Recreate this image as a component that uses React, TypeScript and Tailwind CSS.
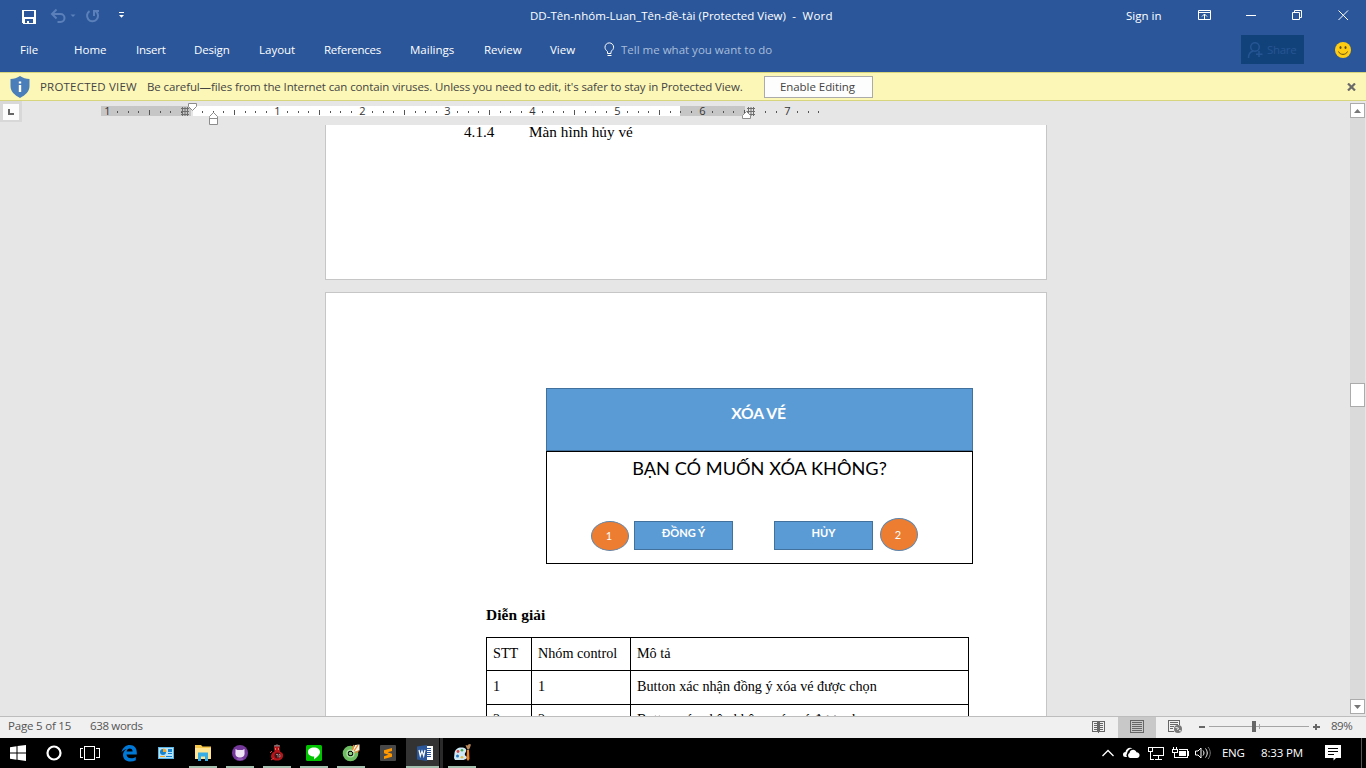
import type { ReactNode } from "react";

const tabs = [
  { label: "File", cls: "w-[54px]" },
  { label: "Home", cls: "w-[62px]" },
  { label: "Insert", cls: "w-[58px] tracking-[-0.25px]" },
  { label: "Design", cls: "w-[65px] tracking-[-0.15px]" },
  { label: "Layout", cls: "w-[65px]" },
  { label: "References", cls: "w-[86px] tracking-[-0.25px]" },
  { label: "Mailings", cls: "w-[74px]" },
  { label: "Review", cls: "w-[66px]" },
  { label: "View", cls: "w-[54px]" },
];

function TitleBar() {
  return (
    <div className="grid h-8 grid-cols-[530px_1fr_240px] items-center">
      <div className="flex h-8 items-center pl-[22px]">
        <svg width="110" height="18" viewBox="0 0 110 18" fill="none">
          <g shapeRendering="crispEdges">
            <path d="M0 3h14v14H1l-1-1zM2 4v6h10V4zM3 12v4h2v-2h2v2h4v-4z" fill="#fff" fillRule="evenodd" />
          </g>
          <g stroke="#5b80ba" strokeWidth="2">
            <path d="M30 7h8.500a4 4 0 0 1 0 8h-3" />
            <path d="M34.500 2.500L30 7l4.500 4.500" />
            <path d="M67.500 4.200a5.500 5.500 0 1 0 6.500 0.300" />
            <path d="M72 9V4h5" />
          </g>
          <path d="M48.500 7.500h5l-2.500 2.500z" fill="#5b80ba" />
          <path d="M97 5h5v1h-5zM97 8h5l-2.500 2.800z" fill="#fff" />
        </svg>
      </div>
      <div className="whitespace-pre tracking-[0.02px]">
        DD-Tên-nhóm-Luan_Tên-đề-tài (Protected View)<span className="tracking-[0.2px]">  -  Word</span>
      </div>
      <div className="flex h-8 items-center">
        <span className="w-[72px]">Sign in</span>
        <svg width="168" height="32" viewBox="0 0 168 32" fill="none" stroke="#fff">
          <path d="M0.500 10.500h12v9h-12zM0.500 12.500h12M6.500 19v-5M4 16.500l2.500-2.500 2.500 2.500" />
          <path d="M48 15.500h10" />
          <path d="M94.500 12.500h7v7h-7zM96.500 12v-1.500h7v7h-2" />
          <path d="M140.500 10.500l9.500 9.500M150 10.500l-9.500 9.500" />
        </svg>
      </div>
    </div>
  );
}

function TabRow() {
  return (
    <div className="flex h-[35px] items-center pl-5">
      {tabs.map((t) => (
        <span key={t.label} className={t.cls}>
          {t.label}
        </span>
      ))}
      <div className="flex flex-1 items-center">
        <svg width="17" height="16" viewBox="0 0 17 16" fill="none" stroke="#fff">
          <path d="M3.500 11.500V9.500C2 8.300 1 7 1 5.200a4.300 4.300 0 0 1 8.600 0C9.600 7 8.500 8.300 7 9.500v2zM3.500 13.500h4" />
        </svg>
        <span className="text-[#a9bddb]">Tell me what you want to do</span>
      </div>
      <div className="flex h-[29px] w-[63px] items-center bg-[#12427a] pl-1.5 text-[#265594]">
        <svg className="mr-1" width="16" height="16" viewBox="0 0 16 16" fill="none" stroke="#265594" strokeWidth="1.500">
          <circle cx="8" cy="5" r="4.300" />
          <path d="M1.500 16c0-4 2-6.500 5-7M12 9v6M9 12.300h6.500" />
        </svg>
        <span className="tracking-[-0.3px]">Share</span>
      </div>
      <svg className="mr-[15px] ml-[31px]" width="16" height="16" viewBox="0 0 16 16">
        <circle cx="8" cy="8" r="8" fill="#fc1" />
        <ellipse cx="5.500" cy="5.500" rx="1" ry="1.500" fill="#5f4c12" />
        <ellipse cx="10.500" cy="5.500" rx="1" ry="1.500" fill="#5f4c12" />
        <path d="M3.500 9.500c1.500 3.800 7.500 3.800 9 0" fill="none" stroke="#5f4c12" />
      </svg>
    </div>
  );
}

function ProtectedBar() {
  return (
    <div className="flex h-[29px] items-center border-y border-[#d8d57f] bg-[#fcf7b6] pl-2.5 text-[#444]">
      <svg className="mr-2.5" width="20" height="22" viewBox="0 0 20 22">
        <path d="M10 0c3 2 6 3 9.500 3v7c0 5.500-4 9-9.500 12C4.500 19 .5 15.500.5 10V3C4 3 7 2 10 0z" fill="#4a7ebb" />
        <path d="M8.800 5.500h2.400v2H8.800zM8.800 9h2.400v7H8.800z" fill="#fff" />
      </svg>
      <span className="w-[107px] tracking-[0.2px]">PROTECTED VIEW</span>
      <span className="w-[617px] tracking-[-0.115px] whitespace-nowrap">
        Be careful—files from the Internet can contain viruses. Unless you need to edit, it's safer to stay in Protected View.
      </span>
      <button className="h-[22px] w-[109px] border border-[#ababab] bg-[#fdfdfd] pr-0.5 leading-5 tracking-[-0.05px]">Enable Editing</button>
      <svg className="mr-2.5 ml-auto" width="9" height="8" viewBox="0 0 9 8" stroke="#6a6a6a" strokeWidth="2.200">
        <path d="M1 .5l7 7M8 .5l-7 7" />
      </svg>
    </div>
  );
}

const inch = 85;
const zero = 192.5;
const marks = Array.from({ length: 68 }, (_, i) => i - 8).filter((k) => k > -8 && k < 60 && k !== 0 && k !== 53);

function Hatch({ x }: { x: number }) {
  return (
    <path
      d={`M${x} 7.500h8M${x} 10.500h8M${x} 13.500h8M${x + 1.5} 6v9M${x + 4} 6v9M${x + 6.5} 6v9`}
      stroke="#6e6e6e"
      fill="none"
    />
  );
}

function Ruler() {
  return (
    <div className="flex h-6">
      <div className="flex h-[21px] w-[22px] items-start bg-[#d8d8d8] pt-[3px] pl-[3px]">
        <div className="flex h-4 w-4 items-center justify-center bg-[#fcfcfc]">
          <svg width="6" height="6" viewBox="0 0 6 6">
            <path d="M1 0v5h5" fill="none" stroke="#666" strokeWidth="2" />
          </svg>
        </div>
      </div>
      <svg width="860" height="24" viewBox="22 0 860 24" fontFamily="Open Sans, sans-serif" fontSize="11">
        <g shapeRendering="crispEdges">
          <rect x="101" y="5" width="90" height="10" fill="#c6c6c6" />
          <rect x="193" y="5" width="487" height="10" fill="#fff" />
          <rect x="680" y="5" width="65" height="10" fill="#c6c6c6" />
          {marks.map((k) => {
            const x = Math.floor(zero + (k * inch) / 8 - 0.5);
            if (k % 8 === 0) return null;
            return k % 4 === 0 ? (
              <rect key={k} x={x} y="9" width="1" height="5" fill="#555" />
            ) : (
              <rect key={k} x={x} y="10" width="1" height="2" fill="#555" />
            );
          })}
        </g>
        {[-1, 1, 2, 3, 4, 5, 6, 7].map((n) => (
          <text key={n} x={zero + n * inch} y="14" textAnchor="middle" fill="#333">
            {Math.abs(n)}
          </text>
        ))}
        <Hatch x={181} />
        <Hatch x={747} />
        <g fill="#fff" stroke="#8c8c8c">
          <path d="M188.500 2.500h8v3l-4 4-4-4z" />
          <path d="M209.500 16.500v-1l4-4 4 4v8h-8zM209.500 17.500h8" />
          <path d="M742.500 17.500v-3l4-4 4 4v3z" />
        </g>
      </svg>
    </div>
  );
}

function Badge({ children, cls }: { children: ReactNode; cls: string }) {
  return (
    <div className={`flex w-[38px] items-center justify-center rounded-[50%] border border-[#5f86ad] bg-[#ed7d31] pr-0.5 text-[11px] text-white ${cls}`}>
      {children}
    </div>
  );
}

function DialogFigure() {
  return (
    <div className="ml-[220px] flex h-[176px] w-[427px] flex-col font-['Lato',sans-serif]">
      <div className="h-[63px] border border-[#41719c] bg-[#5b9bd5] pt-3 pr-0.5 text-center text-[15.7px] leading-6 font-bold tracking-[-0.2px] text-white">
        XÓA VÉ
      </div>
      <div className="flex-1 border border-black text-center text-[18.2px] leading-8 text-black">
        <div>BẠN CÓ MUỐN XÓA KHÔNG?</div>
        <div className="mt-[34px] flex h-[34px] pl-11 text-[11.1px] leading-[22px]">
          <Badge cls="mt-[3px] h-[30px]">1</Badge>
          <div className="mt-[3px] ml-[5px] h-[29px] w-[99px] border border-[#41719c] bg-[#5b9bd5] font-bold text-white">ĐỒNG Ý</div>
          <div className="mt-[3px] ml-[41px] h-[29px] w-[99px] border border-[#41719c] bg-[#5b9bd5] font-bold text-white">HỦY</div>
          <Badge cls="ml-[7px] h-[33px]">2</Badge>
        </div>
      </div>
    </div>
  );
}

const rows = [
  { cells: ["STT", "Nhóm control", "Mô tả"], cls: "h-[33px] leading-[30px]" },
  { cells: ["1", "1", "Button xác nhận đồng ý xóa vé được chọn"], cls: "h-[34px] leading-[30px]" },
  { cells: ["2", "2", "Button xác nhận không xóa vé được chọn"], cls: "h-[34px] leading-7" },
];

function DocumentArea() {
  return (
    <div className="flex flex-1 flex-col overflow-hidden pl-[325px] font-['Liberation_Serif',serif] text-black">
      <div className="flex h-[155px] w-[722px] shrink-0 border border-t-0 border-[#c6c6c6] bg-white pl-[138px] text-[15.2px] leading-[14px]">
        <span className="w-[65px]">4.1.4</span>
        <span className="tracking-[0.03px]">Màn hình hủy vé</span>
      </div>
      <div className="mt-3 h-[600px] w-[722px] shrink-0 border border-[#c6c6c6] bg-white pt-[95px]">
        <DialogFigure />
        <div className="mt-[41px] ml-40 h-8 text-[15.4px] leading-5 font-bold tracking-[0.1px]">Diễn giải</div>
        <div className="ml-40 w-[483px] border-t border-l border-black text-[14.2px]">
          {rows.map((r) => (
            <div key={r.cells[2]} className={`grid grid-cols-[45px_99px_1fr] ${r.cls}`}>
              {r.cells.map((c, i) => (
                <div key={i} className="border-r border-b border-black pl-1.5">
                  {c}
                </div>
              ))}
            </div>
          ))}
        </div>
      </div>
    </div>
  );
}

function ScrollButton({ d }: { d: string }) {
  return (
    <div className="flex h-[15px] w-[15px] items-center justify-center border border-[#ababab] bg-white">
      <svg width="7" height="4" viewBox="0 0 7 4">
        <path d={d} fill="#777" />
      </svg>
    </div>
  );
}

function ScrollBar() {
  return (
    <div className="mt-0.5 mr-px mb-0.5 flex w-[15px] flex-col bg-[#dadada]">
      <ScrollButton d="M0 4L3.500 0 7 4z" />
      <div className="mt-[265px] h-6 border border-[#ababab] bg-white" />
      <div className="mt-auto">
        <ScrollButton d="M0 0L3.500 4 7 0z" />
      </div>
    </div>
  );
}

function StatusBar() {
  return (
    <div className="flex h-[22px] shrink-0 items-center border-t border-[#bdbdbd] bg-[#f0f0f0] pl-2 text-[#555]">
      <span className="w-[82px] pb-[3px] tracking-[-0.2px]">Page 5 of 15</span>
      <span className="pb-[3px] tracking-[-0.35px]">638 words</span>
      <svg className="ml-auto" width="244" height="21" viewBox="1080 0 244 21" fill="none" stroke="#666">
        <g shapeRendering="crispEdges">
          <rect x="1118" y="0" width="38" height="21" fill="#c8c8c8" stroke="none" />
          <path d="M1092.500 4.500h5v10h-5zM1099.500 4.500h5v10h-5zM1098.500 4v12" />
          <path d="M1094 6.500h3M1094 8.500h3M1094 10.500h3M1094 12.500h3M1100 6.500h3M1100 8.500h3M1100 10.500h3M1100 12.500h3" />
          <path d="M1130.500 3.500h13v12h-13zM1132 5.500h10M1132 7.500h10M1132 9.500h10M1132 11.500h10M1132 13.500h10" />
          <path d="M1174 14.500h-5.500v-11h11v4M1170 5.500h8M1170 7.500h8M1170 9.500h4M1170 11.500h3" />
          <path d="M1209 9.500h100M1259.500 7v5" stroke="#a5a5a5" />
          <path d="M1199 9.500h6M1199 10.500h6M1312.500 9.500h7M1312.500 10.500h7M1315.500 7v6M1316.500 7v6" />
          <rect x="1252" y="4" width="4" height="11" fill="#666" stroke="none" />
        </g>
        <circle cx="1178" cy="12" r="4" fill="#777" stroke="none" />
        <path d="M1175.500 10.500l3 .5-1 2M1179 13.500l2 .500" stroke="#f0f0f0" />
      </svg>
      <span className="ml-[7px] w-[35px] pb-[3px] tracking-[-0.5px]">89%</span>
    </div>
  );
}

function Task({ children, open, active }: { children: ReactNode; open?: boolean; active?: boolean }) {
  return (
    <div className={`flex h-[30px] w-[37px] flex-col items-center ${active ? "bg-[#333]" : ""}`}>
      <svg className="mt-1.5" width="18" height="18" viewBox="0 0 18 18">
        {children}
      </svg>
      {open && <div className={`mt-1 h-0.5 bg-[#a3bfae] ${active ? "w-full" : "w-7"}`} />}
    </div>
  );
}

function TaskBar() {
  return (
    <div className="flex h-[30px] shrink-0 bg-black text-white">
      <svg width="110" height="30" viewBox="0 0 110 30" fill="#fff">
        <path d="M10 9.300l6.500-1v6.200H10zM17.500 8.100L26 7v7.500h-8.500zM10 15.500h6.500v6.200l-6.500-1zM17.500 15.500H26V23l-8.500-1.200z" />
        <circle cx="54" cy="15" r="6.500" fill="none" stroke="#fff" strokeWidth="2.200" />
        <g fill="none" stroke="#fff" shapeRendering="crispEdges">
          <path d="M84.500 8.500h10v13h-10zM83 10.500h-2.500v9H83M96 10.500h3.500v9H96" />
        </g>
      </svg>
      <Task>
        <path
          d="M1.500 8.500C2.500 3.500 6 1 9.800 1c4.600 0 7 3.400 7 7.400v2H6.500c.3 2.700 2.300 3.800 4.800 3.800 1.800 0 3.200-.5 4.500-1.300v3.400c-1.500.8-3.300 1.200-5.300 1.200-4.700 0-7.500-2.700-7.500-6.500 0-2.700 1.500-4.800 3.800-6C4.200 5.600 2.700 6.700 1.500 8.500zM6.600 7.500h6c0-2-1-3.100-2.800-3.100-1.700 0-2.800 1.200-3.200 3.100z"
          fill="#0078d7"
        />
      </Task>
      <Task>
        <path d="M1 3h16v12H1z" fill="#5ab4e5" />
        <path d="M2 4h14v10H2z" fill="#b9e3f8" />
        <circle cx="6" cy="8" r="3" fill="#1583cf" />
        <path d="M6 8V4.500A3.500 3.500 0 0 1 9.500 8z" fill="#f5a623" />
        <path d="M11 5h4v3h-4zM11 9h4v1h-4z" fill="#1583cf" />
        <path d="M3 12h5v1H3z" fill="#f5a623" />
        <path d="M9 12h6v1H9z" fill="#1583cf" />
      </Task>
      <Task open>
        <path d="M1 2V1h6l1.500 1.500H17V15H1z" fill="#f5c84c" />
        <path d="M1 4h16v11H1z" fill="#ffe591" />
        <path d="M4 17V8.500h10V17h-3v-4.500H7V17z" fill="#37ade6" />
      </Task>
      <Task open>
        <circle cx="9" cy="9" r="8" fill="#74389a" />
        <path d="M4.500 5l2 1h5l2-1v3c.6 3.300-1 5.500-4.500 5.500S3.900 11.300 4.500 8z" fill="#eee4f3" />
        <path d="M5.500 14.500h7l-1 1.200h-5z" fill="#9b67bb" />
      </Task>
      <Task open>
        <path d="M6 1.500L9 .5l3 1-.5 3 .5 3c3 1.500 3.500 3 3 5s-2 4-6 4-6-2-6-4 1-4 3.500-5L6 4z" fill="#b51419" />
        <path d="M6 1.500L9 .5l3 1v1H6z" fill="#777" />
        <path d="M7 5h1M10 5h1" stroke="#ffd3aa" />
        <circle cx="9.500" cy="11.500" r="3" fill="#4b1216" />
        <path d="M8 10.500h2v3M11 10.500h1v2.500h-1" fill="none" stroke="#ccc" strokeWidth=".6" />
        <path d="M2 9l2-2M3 16l3-2" stroke="#df4045" />
      </Task>
      <Task open>
        <rect x="1" y="1" width="16" height="16" rx="1.500" fill="#00c300" />
        <path d="M9 3.500c3.500 0 6 2 6 4.500 0 3-3 5-6 7.500l.2-3C5.500 12.500 3 10.800 3 8s2.500-4.500 6-4.500z" fill="#fff" />
      </Task>
      <Task open>
        <circle cx="8.500" cy="9.500" r="5.300" fill="none" stroke="#6fbd62" strokeWidth="5" />
        <circle cx="8.500" cy="9.500" r="3.500" fill="none" stroke="#b8e0af" strokeWidth="1.200" />
        <path d="M10 8L13 1l4.500-.5v6z" fill="#fff4dd" />
        <path d="M10.500 6L12 1M12 7l4-6M13 9l4-2.500" stroke="#f08336" strokeWidth="1.300" />
        <circle cx="8.500" cy="9.500" r="1.800" fill="#8fd184" />
      </Task>
      <Task>
        <rect x="1" y="1" width="16" height="16" rx="1" fill="#484848" />
        <path d="M5 6.200L13 4v3L8.500 8.300 13 9.800v2.900L5 15v-2.800l4.500-1.400L5 9.200z" fill="#ff9800" />
      </Task>
      <Task open active>
        <path d="M9 2h8v14H9z" fill="#fff" />
        <path d="M10 4.500h5M10 6.500h5M10 8.500h5M10 10.500h5M10 12.500h5" stroke="#2b579a" />
        <path d="M1 2.500L11 1v16L1 15.500z" fill="#2b579a" />
        <path d="M3 6l1.300 6L6 7l1.700 5L9 6" fill="none" stroke="#fff" strokeWidth="1.200" />
      </Task>
      <div className="-ml-1 h-[30px] w-1 border-l border-black bg-[#2a2a2a]" />
      <Task open>
        <path d="M1.500 9C2 5 5.500 3 9.500 3.500c4 .5 4.500 3 3 5s-.5 3 1 4-1 3.500-4 3.500H2l-1-2z" fill="#cfe8f5" />
        <circle cx="5" cy="7.500" r="1.400" fill="#d9433f" />
        <circle cx="9" cy="6.200" r="1.300" fill="#49a84a" />
        <circle cx="4.500" cy="12" r="1.500" fill="#2777c2" />
        <circle cx="9" cy="13.200" r="1.300" fill="#e7bd3e" />
        <path d="M12.500 1l2 .5L16 0l2 .500-1 3-1 2h-1.500l-1-2z" fill="#b98a5b" />
        <path d="M14 6h2l.5 9-1.500 2-1.500-2z" fill="#ee8220" />
      </Task>
      <div className="ml-auto flex items-center">
        <svg width="122" height="30" viewBox="1100 0 122 30" fill="none" stroke="#fff">
          <path d="M1102.500 18l5.500-5.500 5.500 5.500" strokeWidth="1.300" />
          <path d="M1127 19h-1.500a2.500 2.500 0 0 1 0-5c.3-3 4-5.500 7-3.500-3 0-5 2-5.500 5a3 3 0 0 0 0 3.500z" fill="#fff" stroke="none" />
          <path d="M1130 20a2.700 2.700 0 0 1-.5-5c.5-4 6-4.500 7-.700 4 0 4 5.700.5 5.700z" fill="#fff" stroke="none" />
          <g shapeRendering="crispEdges">
            <path d="M1153 9.500h10.500v8h-10.500M1158.500 18v3M1148.500 9.500h4v4h-4zM1150.500 14v7.500h3M1155 21.500h7" />
            <path d="M1179 11.500h8.500v8h-10.500M1188.500 13v5" />
            <path d="M1179 13h7v5h-7z" fill="#fff" stroke="none" />
            <path d="M1173.500 9v2M1176.500 9v2M1172.500 11.500h5v3h-5zM1174.500 15v4.500h3" />
          </g>
          <path d="M1195.500 13h2.500l3-3v10l-3-3h-2.500z" />
          <path d="M1203 12.500c1.300 1.500 1.300 3.500 0 5M1205.500 10.500c2.300 2.800 2.300 6.200 0 9" />
          <path d="M1208 9c3 3.500 3 8.500 0 12" stroke="#777" />
        </svg>
        <span className="w-[39px] pb-px tracking-[-0.3px]">ENG</span>
        <span className="w-16 pb-px tracking-[-0.15px]">8:33 PM</span>
        <svg width="41" height="30" viewBox="1325 0 41 30">
          <path d="M1325 7h16v13h-5l-2.500 2.500V20h-8.500z" fill="#fff" />
          <path d="M1328 10.500h10M1328 13.500h10M1328 16.500h6" stroke="#000" />
          <path d="M1361.500 0v30" stroke="#555" />
        </svg>
      </div>
    </div>
  );
}

export default function App() {
  return (
    <div className="flex h-[768px] w-[1366px] flex-col overflow-hidden bg-[#e6e6e6] font-['Open_Sans',sans-serif] text-[11.5px] leading-4">
      <header className="h-[72px] shrink-0 bg-[#2b579a] text-white">
        <TitleBar />
        <TabRow />
      </header>
      <ProtectedBar />
      <main className="flex min-h-0 flex-1">
        <div className="flex flex-1 flex-col">
          <Ruler />
          <DocumentArea />
        </div>
        <ScrollBar />
      </main>
      <StatusBar />
      <TaskBar />
    </div>
  );
}
